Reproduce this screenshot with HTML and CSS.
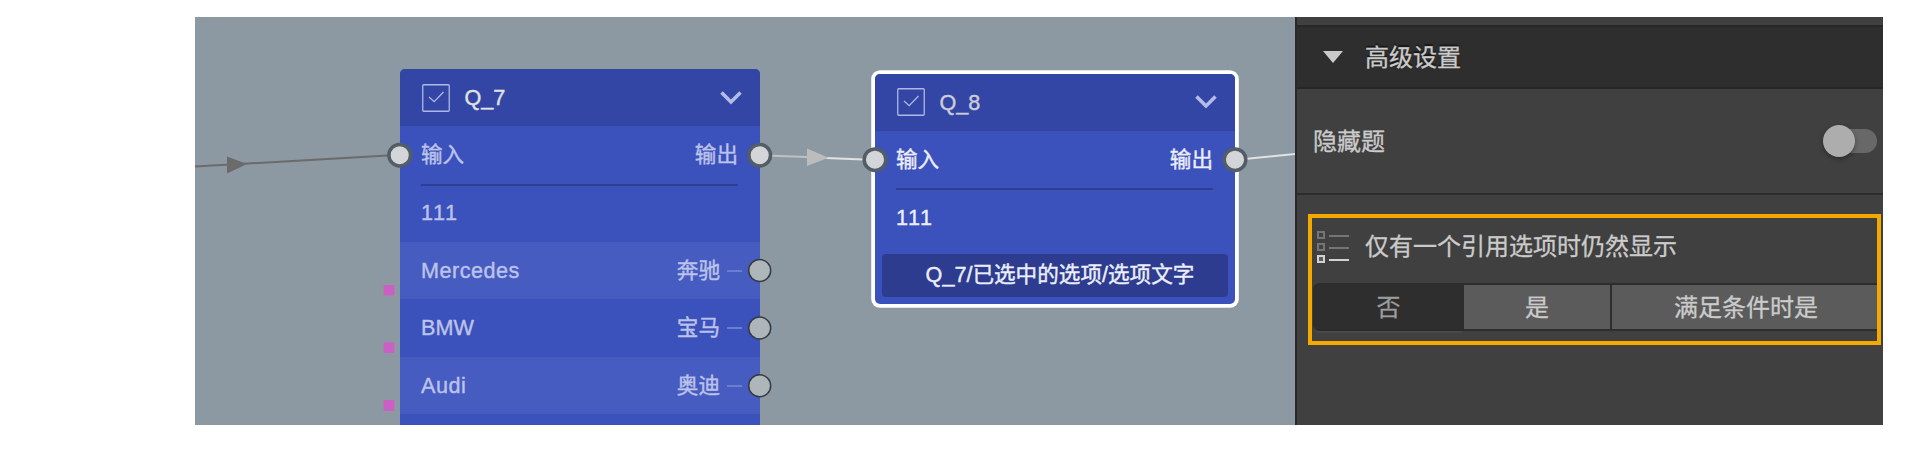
FILE: index.html
```html
<!DOCTYPE html>
<html lang="zh-CN">
<head>
<meta charset="utf-8">
<title>Q_8</title>
<link rel="stylesheet" href="styles.css">
</head>
<body>
<div class="app">
  <main class="canvas">
    <section class="node node-q7">
      <header class="node-head">
        <svg class="check" viewBox="0 0 28 28"><rect x=".75" y=".75" width="26.5" height="26.5" rx="1"/><path d="M7 13l5.200 4.700L21.500 8"/></svg>
        <span class="node-title">Q_7</span>
        <svg class="chevron" viewBox="0 0 22 14"><path d="M1.500 1.500L11 11l9.500-9.500"/></svg>
      </header>
      <div class="io"><span>输入</span><span>输出</span></div>
      <div class="row code">111</div>
      <div class="row option"><span class="spaced">Mercedes</span><span class="alias">奔驰<i class="dash"></i></span></div>
      <div class="row"><span>BMW</span><span class="alias">宝马<i class="dash"></i></span></div>
      <div class="row option"><span class="spaced">Audi</span><span class="alias">奥迪<i class="dash"></i></span></div>
      <div class="row"></div>
    </section>
    <section class="node node-q8 selected">
      <header class="node-head">
        <svg class="check" viewBox="0 0 28 28"><rect x=".75" y=".75" width="26.5" height="26.5" rx="1"/><path d="M7 13l5.200 4.700L21.500 8"/></svg>
        <span class="node-title">Q_8</span>
        <svg class="chevron" viewBox="0 0 22 14"><path d="M1.500 1.500L11 11l9.500-9.500"/></svg>
      </header>
      <div class="io"><span>输入</span><span>输出</span></div>
      <div class="row code">111</div>
      <div class="ref">Q_7/已选中的选项/选项文字</div>
    </section>
    <svg class="wires" viewBox="195 17 1100 408">
      <path class="wire dark" d="M195 166.500L388 155.500"/>
      <path class="arrow dark" d="M227 156.500V173.500L247 164z"/>
      <path class="wire light" d="M772 155.800L807 157"/>
      <path class="wire bright" d="M826 158L863 159.500"/>
      <path class="arrow light" d="M807 148.500V166L828.500 157.700z"/>
      <path class="wire bright" d="M1247 158.800L1295 154"/>
      <g class="port">
        <circle cx="399.700" cy="155.200" r="10.800"/><circle cx="759.700" cy="155.200" r="10.800"/>
        <circle cx="875" cy="159.700" r="10.800"/><circle cx="1235" cy="159.700" r="10.800"/>
      </g>
      <g class="option-port">
        <circle cx="759.700" cy="270.500" r="11"/><circle cx="759.700" cy="328" r="11"/><circle cx="759.700" cy="385.700" r="11"/>
      </g>
      <g class="marker">
        <rect x="383.700" y="285" width="10.600" height="10.500"/><rect x="383.700" y="342.300" width="10.600" height="10.700"/><rect x="383.700" y="400" width="10.600" height="11"/>
      </g>
    </svg>
  </main>
  <aside class="panel">
    <div class="strip"></div>
    <div class="panel-head">
      <svg class="caret" viewBox="0 0 20 12"><path d="M0 0H20L10 12z"/></svg>
      <span class="caption">高级设置</span>
    </div>
    <div class="setting"><span class="caption">隐藏题</span><span class="toggle"><span class="knob"></span></span></div>
    <div class="highlight">
      <div class="label">
        <svg class="list" viewBox="0 0 32 32">
          <g class="muted"><rect x="1" y="1" width="6" height="6"/><rect x="1" y="13" width="6" height="6"/><path d="M12 5H32M12 17H32"/></g>
          <g class="active"><rect x="1" y="25" width="6" height="6"/><path d="M12 29H32"/></g>
        </svg>
        <span class="caption">仅有一个引用选项时仍然显示</span>
      </div>
      <div class="segments">
        <span class="segment on">否</span><span class="segment">是</span><span class="segment wide">满足条件时是</span>
      </div>
    </div>
  </aside>
</div>
</body>
</html>
```
FILE: styles.css
```css
body {
  margin: 0;
  padding: 17px 37px 25px 195px;
  background: #fff;
  font-family: "Liberation Sans", "Noto Sans CJK SC", sans-serif;
}
.app {
  display: flex;
  width: 1688px;
  height: 408px;
  overflow: hidden;
}
.canvas {
  position: relative;
  flex: 1;
  overflow: hidden;
  background: #8d99a2;
}
.node {
  position: absolute;
  width: 360px;
  background: #3b51bb;
  border-radius: 5px;
  color: #bcc3ea;
  font-size: 21.6px;
  font-kerning: none;
  line-height: 30px;
  -webkit-text-stroke: 0.4px currentColor;
}
.node-q7 { left: 205px; top: 52px; }
.node-q8 { left: 680px; top: 57px; height: 230px; color: #eceefa; }
.selected { box-shadow: 0 0 0 3.800px #fff; }
.node-head {
  display: flex;
  align-items: center;
  box-sizing: border-box;
  height: 57.400px;
  padding: 0 18px 0 22px;
  background: #3346a5;
  border-radius: 5px 5px 0 0;
}
.node-q8 .node-head { height: 57px; padding-bottom: 1px; }
.check {
  width: 28px;
  height: 28px;
  margin-left: -0.500px;
  fill: none;
  stroke: #b0b8e4;
  stroke-width: 1.300;
}
.node-title {
  flex: 1;
  padding-left: 15px;
  color: #e2e2e2;
}
.node-q8 .node-title { padding-top: 1px; color: #cccdd8; }
.chevron {
  width: 22px;
  height: 14px;
  fill: none;
  stroke: #b3bbe6;
  stroke-width: 3.600;
}
.io {
  display: flex;
  justify-content: space-between;
  align-items: center;
  box-sizing: border-box;
  height: 59.600px;
  margin: 0 22px 0 21px;
  border-bottom: 2px solid #2d3e93;
}
.node-q8 .io { height: 59px; }
.row {
  display: flex;
  justify-content: space-between;
  align-items: center;
  box-sizing: border-box;
  height: 57.600px;
  padding: 1px 18px 0 21px;
}
.row.code { height: 55.600px; padding-top: 0; padding-bottom: 1px; }
.node-q8 .row.code { padding-bottom: 0; }
.option { background: #475cc1; }
.spaced { letter-spacing: 0.500px; }
.alias {
  display: flex;
  align-items: center;
  gap: 7px;
}
.dash {
  width: 15px;
  height: 2px;
  background: #6c7dcf;
}
.ref {
  box-sizing: border-box;
  height: 43.500px;
  margin: 8px 7px 0;
  padding: 6px 0 0 10px;
  background: #2d3c8e;
  border-radius: 4px;
  text-align: center;
  white-space: nowrap;
}
.wires {
  position: absolute;
  inset: 0;
  width: 1100px;
  height: 408px;
}
.wire { fill: none; stroke-width: 2; }
.wire.dark { stroke: #6b6b6b; }
.wire.light { stroke: #c0c1c2; }
.wire.bright { stroke: #e0e2e3; }
.arrow.dark { fill: #6b6b6b; }
.arrow.light { fill: #bcbcbc; }
.port { fill: #d3d5d9; stroke: #525d66; stroke-width: 3.500; }
.option-port { fill: #aeb6ba; stroke: #343a41; stroke-width: 1.500; }
.marker { fill: #cb60c4; }
.panel {
  box-sizing: border-box;
  width: 588px;
  border-left: 2px solid #292929;
  background: #404040;
  color: #cbcbcb;
  font-family: "Noto Sans CJK SC", sans-serif;
  font-size: 24px;
  line-height: 36px;
  -webkit-text-stroke: 0.3px currentColor;
}
.strip { height: 8px; }
.caption { padding-bottom: 3px; }
.panel-head {
  display: flex;
  align-items: center;
  gap: 22px;
  height: 60px;
  padding-left: 26px;
  background: #2e2e2e;
  border-top: 2px solid #272727;
  border-bottom: 2px solid #272727;
  text-shadow: 0 -2px 1px #161616;
}
.caret { width: 20px; height: 12px; fill: #cbcbcb; }
.setting {
  display: flex;
  align-items: center;
  justify-content: space-between;
  height: 104px;
  padding: 0 6px 0 16px;
  border-bottom: 2px solid #2d2d2d;
}
.toggle {
  width: 52px;
  height: 24px;
  border-radius: 12px;
  background: #686868;
}
.knob {
  display: block;
  width: 32px;
  height: 32px;
  margin: -4px 0 0 -2px;
  border-radius: 50%;
  background: #adadad;
  box-shadow: 0 2px 5px rgba(0, 0, 0, 0.35);
}
.highlight {
  box-sizing: border-box;
  height: 131px;
  margin: 19px 2px 0 11px;
  border: 4px solid #f3a900;
  overflow: hidden;
}
.label {
  display: flex;
  align-items: center;
  gap: 16px;
  height: 57px;
  padding: 0 0 0 5px;
  margin-bottom: 8px;
}
.list { width: 32px; height: 32px; fill: none; stroke-width: 2; }
.muted { stroke: #757575; }
.active { stroke: #d2d2d2; }
.active rect { fill: #5c5c5c; }
.segments {
  display: flex;
  box-sizing: border-box;
  width: 572px;
  height: 48px;
  margin-left: 1px;
  border: 2px solid #2d2d2d;
  border-radius: 6px;
  background: #2d2d2d;
  gap: 2px;
  line-height: 41px;
  text-align: center;
}
.segment { width: 146px; background: #5b5b5b; }
.segment.on {
  width: 147px;
  background: #2e2e2e;
  color: #9d9d9d;
  border-radius: 4px 0 0 4px;
  box-shadow: 0 2px 0 #2d2d2d, 0 4px 0 #494949;
}
.segment.wide { width: 268px; }
```
